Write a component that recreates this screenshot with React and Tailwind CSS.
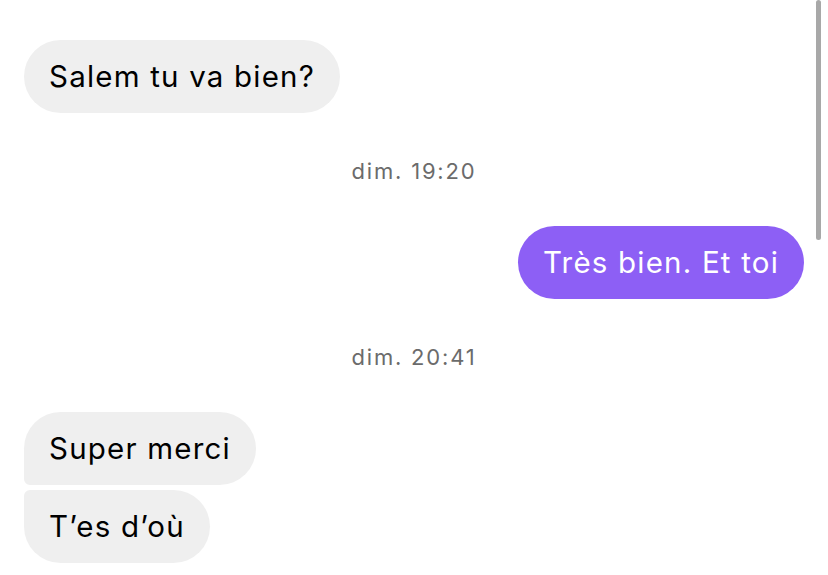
export default function App() {
  const font = { fontFamily: 'Inter, "Noto Sans", sans-serif' };
  const bubble = "h-[73px] flex items-center px-[25px] rounded-[37px] text-[29.5px] tracking-[1.2px]";
  return (
    <div className="relative w-[828px] h-[575px] overflow-hidden bg-white" style={font}>
      <div className="flex flex-col pt-[40px] px-[24px]">
        <div className="flex">
          <div className={`${bubble} bg-[#efefef] text-black`}>
            Salem tu va bien?
          </div>
        </div>
        <div className="h-[113px] flex items-center justify-center pt-[3px] text-[22px] tracking-[1.8px] text-[#6b6b6b]">
          dim. 19:20
        </div>
        <div className="flex justify-end">
          <div className={`${bubble} bg-[#8d5ff5] text-white`}>
            Très bien. Et toi
          </div>
        </div>
        <div className="h-[113px] flex items-center justify-center pt-[3px] text-[22px] tracking-[1.8px] text-[#6b6b6b]">
          dim. 20:41
        </div>
        <div className="flex flex-col items-start gap-[5px]">
          <div className={`${bubble} rounded-bl-[6px] bg-[#efefef] text-black`}>
            Super merci
          </div>
          <div className={`${bubble} rounded-tl-[6px] bg-[#efefef] text-black`}>
            T’es d’où
          </div>
        </div>
      </div>
      <div className="absolute right-[7px] top-0 w-[5px] h-[240px] rounded-full bg-[#a8a8a8]" />
    </div>
  );
}
